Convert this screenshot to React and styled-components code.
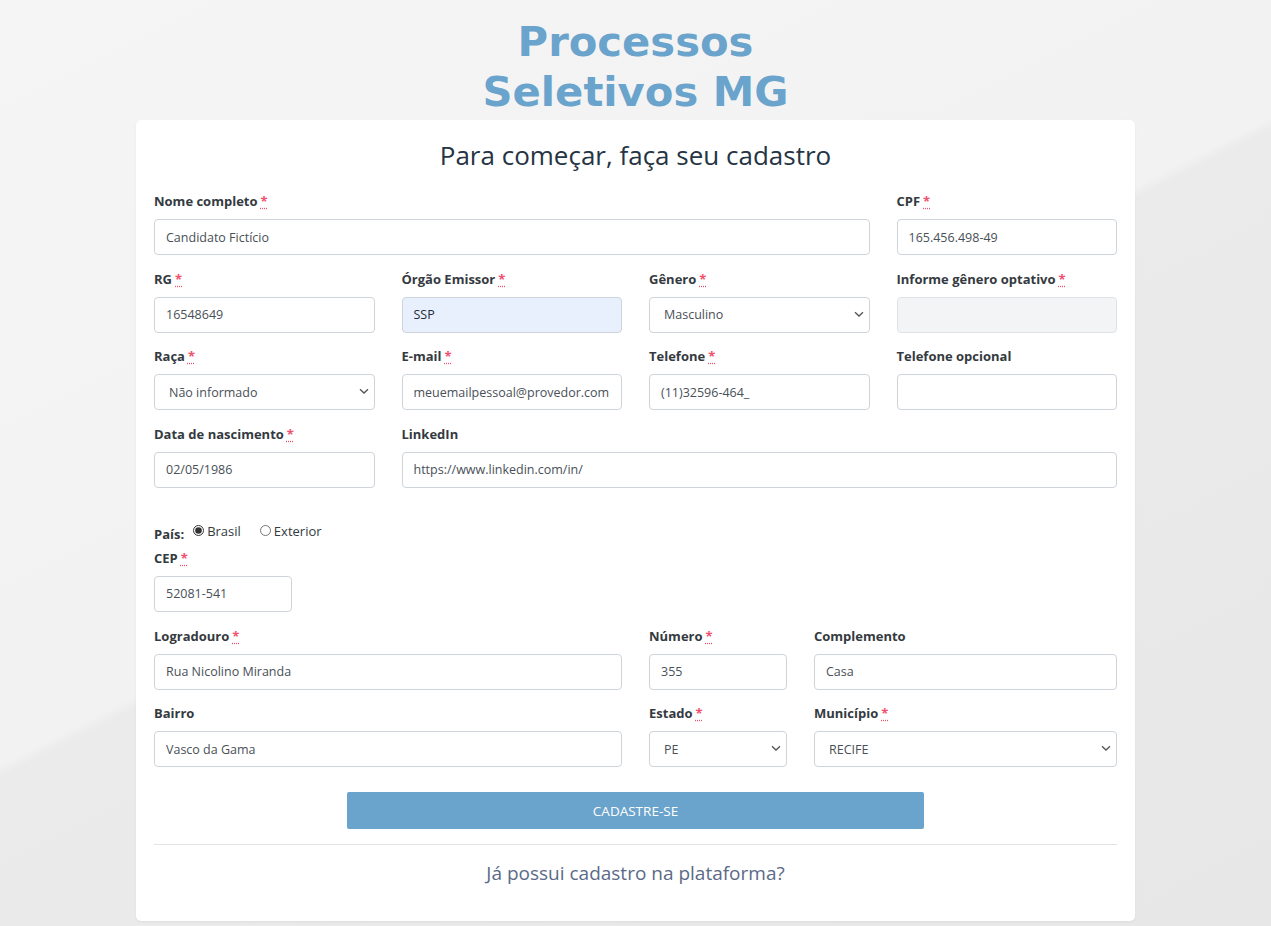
import styled, { createGlobalStyle } from "styled-components";

const GlobalStyle = createGlobalStyle`
  * { box-sizing: border-box; }
  body {
    margin: 0;
    font-family: "Open Sans", "Liberation Sans", sans-serif;
    background: linear-gradient(153deg, #f5f5f5 0%, #f2f2f2 48.6%, #ebebeb 49.4%, #e7e7e7 100%);
    min-height: 926px;
  }
`;

const Page = styled.div`
  min-height: 926px;
  padding-top: 17px;
`;

const Brand = styled.h1`
  margin: 0;
  text-align: center;
  font-family: "DejaVu Sans", "Liberation Sans", sans-serif;
  font-weight: 700;
  font-size: 41.7px;
  line-height: 50px;
  color: #6aa3cb;
`;

const Card = styled.div`
  width: 999px;
  margin: 3px auto 0;
  background: #fff;
  border-radius: 5px;
  padding: 18px 18px 35px;
  box-shadow: 0 1px 3px rgba(0, 0, 0, 0.05);
`;

const CardTitle = styled.h2`
  margin: 0 0 20px;
  text-align: center;
  font-size: 26px;
  font-weight: 500;
  line-height: 34px;
  color: #263444;
`;

const Grid = styled.div`
  display: grid;
  grid-template-columns: repeat(12, 1fr);
  column-gap: 27px;
  row-gap: 14.67px;
`;

const Field = styled.div`
  grid-column: span ${(p) => p.span};
  display: flex;
  flex-direction: column;
  min-width: 0;
`;

const Label = styled.label`
  font-size: 13px;
  font-weight: 700;
  line-height: 18px;
  color: #343a40;
  margin-bottom: 9px;
`;

const Req = styled.abbr`
  color: #f0506e;
  margin-left: 3px;
  text-decoration: underline dotted;
  text-underline-offset: 2px;
  cursor: help;
`;

const Input = styled.input`
  height: 36px;
  width: 100%;
  border: 1px solid ${(p) => (p.disabled ? "#dfe3e8" : "#ced4da")};
  border-radius: 4px;
  padding: 0 11px;
  font-family: "Open Sans", "Liberation Sans", sans-serif;
  font-size: 12.5px;
  color: ${(p) => (p.$filled ? "#1d2b3a" : "#495057")};
  background: ${(p) =>
    p.disabled ? "#f3f4f6" : p.$filled ? "#e8f0fe" : "#fff"};
  outline: none;
`;

const SelectWrap = styled.div`
  position: relative;
  height: 36px;

  svg {
    position: absolute;
    right: 6px;
    top: 14px;
    pointer-events: none;
  }
`;

const SelectBox = styled.select`
  appearance: none;
  height: 36px;
  width: 100%;
  border: 1px solid #ced4da;
  border-radius: 4px;
  padding: 0 24px 0 14px;
  font-family: "Open Sans", "Liberation Sans", sans-serif;
  font-size: 12.5px;
  color: #495057;
  background: #fff;
  outline: none;
`;

const Chevron = () => (
  <svg width="10" height="7" viewBox="0 0 10 7">
    <path d="M1 1.2 L5 5 L9 1.2" fill="none" stroke="#555" strokeWidth="1.3" />
  </svg>
);

const Select = ({ children, defaultValue }) => (
  <SelectWrap>
    <SelectBox defaultValue={defaultValue}>{children}</SelectBox>
    <Chevron />
  </SelectWrap>
);

const PaisRow = styled.div`
  display: flex;
  align-items: flex-start;
  gap: 9px;
  margin: 34px 0 9px;
  height: 18px;
`;

const PaisLabel = styled.span`
  font-size: 13px;
  font-weight: 700;
  line-height: 18px;
  color: #343a40;
  margin-top: 3px;
`;

const RadioGroup = styled.div`
  display: flex;
  gap: 19px;
`;

const RadioOption = styled.label`
  display: flex;
  align-items: center;
  gap: 3px;
  font-size: 13px;
  line-height: 18px;
  color: #343a40;

  input {
    margin: 0;
    width: 11px;
    height: 11px;
    accent-color: #333;
  }
`;

const SubmitButton = styled.button`
  display: block;
  width: 60%;
  height: 37px;
  margin: 25px auto 0;
  border: none;
  border-radius: 2px;
  background: #6aa3cb;
  color: #fff;
  font-family: "Open Sans", "Liberation Sans", sans-serif;
  font-size: 13.5px;
  text-transform: uppercase;
  cursor: pointer;
`;

const Divider = styled.hr`
  border: none;
  border-top: 1px solid #e3e3e3;
  margin: 15px 0 0;
`;

const LoginLink = styled.a`
  display: block;
  margin-top: 15px;
  text-align: center;
  font-size: 19px;
  line-height: 26px;
  color: #5b6a87;
  text-decoration: none;
  cursor: pointer;
`;

const Required = () => <Req title="obrigatório">*</Req>;

const App = () => {
  return (
    <Page>
      <GlobalStyle />
      <Brand>
        Processos
        <br />
        Seletivos MG
      </Brand>
      <Card>
        <CardTitle>Para começar, faça seu cadastro</CardTitle>
        <Grid>
          <Field span={9}>
            <Label>
              Nome completo<Required />
            </Label>
            <Input defaultValue="Candidato Fictício" />
          </Field>
          <Field span={3}>
            <Label>
              CPF<Required />
            </Label>
            <Input defaultValue="165.456.498-49" />
          </Field>

          <Field span={3}>
            <Label>
              RG<Required />
            </Label>
            <Input defaultValue="16548649" />
          </Field>
          <Field span={3}>
            <Label>
              Órgão Emissor<Required />
            </Label>
            <Input $filled defaultValue="SSP" />
          </Field>
          <Field span={3}>
            <Label>
              Gênero<Required />
            </Label>
            <Select defaultValue="Masculino">
              <option>Masculino</option>
              <option>Feminino</option>
              <option>Outro</option>
            </Select>
          </Field>
          <Field span={3}>
            <Label>
              Informe gênero optativo<Required />
            </Label>
            <Input disabled />
          </Field>

          <Field span={3}>
            <Label>
              Raça<Required />
            </Label>
            <Select defaultValue="Não informado">
              <option>Não informado</option>
              <option>Branca</option>
              <option>Preta</option>
              <option>Parda</option>
            </Select>
          </Field>
          <Field span={3}>
            <Label>
              E-mail<Required />
            </Label>
            <Input defaultValue="meuemailpessoal@provedor.com" />
          </Field>
          <Field span={3}>
            <Label>
              Telefone<Required />
            </Label>
            <Input defaultValue="(11)32596-464_" />
          </Field>
          <Field span={3}>
            <Label>Telefone opcional</Label>
            <Input />
          </Field>

          <Field span={3}>
            <Label>
              Data de nascimento<Required />
            </Label>
            <Input defaultValue="02/05/1986" />
          </Field>
          <Field span={9}>
            <Label>LinkedIn</Label>
            <Input defaultValue="https://www.linkedin.com/in/" />
          </Field>
        </Grid>

        <PaisRow>
          <PaisLabel>País:</PaisLabel>
          <RadioGroup>
            <RadioOption>
              <input type="radio" name="pais" defaultChecked />
              Brasil
            </RadioOption>
            <RadioOption>
              <input type="radio" name="pais" />
              Exterior
            </RadioOption>
          </RadioGroup>
        </PaisRow>

        <Grid>
          <Field span={2}>
            <Label>
              CEP<Required />
            </Label>
            <Input defaultValue="52081-541" />
          </Field>
          <Field span={10} />

          <Field span={6}>
            <Label>
              Logradouro<Required />
            </Label>
            <Input defaultValue="Rua Nicolino Miranda" />
          </Field>
          <Field span={2}>
            <Label>
              Número<Required />
            </Label>
            <Input defaultValue="355" />
          </Field>
          <Field span={4}>
            <Label>Complemento</Label>
            <Input defaultValue="Casa" />
          </Field>

          <Field span={6}>
            <Label>Bairro</Label>
            <Input defaultValue="Vasco da Gama" />
          </Field>
          <Field span={2}>
            <Label>
              Estado<Required />
            </Label>
            <Select defaultValue="PE">
              <option>PE</option>
              <option>MG</option>
              <option>SP</option>
            </Select>
          </Field>
          <Field span={4}>
            <Label>
              Município<Required />
            </Label>
            <Select defaultValue="RECIFE">
              <option>RECIFE</option>
              <option>OLINDA</option>
            </Select>
          </Field>
        </Grid>

        <SubmitButton type="button">Cadastre-se</SubmitButton>
        <Divider />
        <LoginLink>Já possui cadastro na plataforma?</LoginLink>
      </Card>
    </Page>
  );
};

export default App;
